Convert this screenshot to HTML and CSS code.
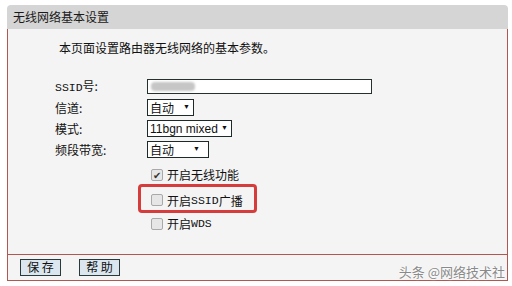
FILE: index.html
```html
<!DOCTYPE html>
<html lang="zh-CN">
<head>
    <meta charset="UTF-8">
    <title>无线网络基本设置</title>
    <link rel="stylesheet" href="styles.css">
</head>
<body>
    <div class="panel">
        <div class="panel-head">无线网络基本设置</div>
        <div class="panel-body">
            <p class="intro">本页面设置路由器无线网络的基本参数。</p>
            <div class="form-grid">
                <label class="lbl"><span class="mono">SSID</span>号:</label>
                <div class="ctl"><span class="text-box"><span class="blur"></span></span></div>
                <label class="lbl">信道:</label>
                <div class="ctl"><span class="drop w-ch">自动<i class="arr">▼</i></span></div>
                <label class="lbl">模式:</label>
                <div class="ctl"><span class="drop w-mode">11bgn mixed<i class="arr">▼</i></span></div>
                <label class="lbl">频段带宽:</label>
                <div class="ctl"><span class="drop w-bw">自动<i class="arr">▼</i></span></div>
            </div>
            <div class="checks">
                <div class="check-row"><span class="box checked">&#10004;</span>开启无线功能</div>
                <div class="check-row mark"><span class="box"></span>开启<span class="mono">SSID</span>广播</div>
                <div class="check-row last"><span class="box"></span>开启<span class="mono">WDS</span></div>
            </div>
        </div>
        <div class="panel-foot">
            <button class="btn">保 存</button>
            <button class="btn">帮 助</button>
        </div>
    </div>
    <div class="watermark">头条 @网络技术社</div>
</body>
</html>
```

FILE: styles.css
```css
html{
    box-sizing: border-box;
    font-family: "Noto Sans CJK SC", sans-serif;
    font-size: 12px;
}
*,*::before,*::after{
    box-sizing: inherit;
    margin: 0;
    padding: 0;
}
body{
    background-color: #fff;
    color: #111;
    position: relative;
    width: 512px;
    height: 286px;
    overflow: hidden;
}
.panel{
    margin: 5px 0 0 7px;
    width: 501px;
}
.panel-head{
    height: 24px;
    line-height: 24px;
    padding-left: 6px;
    background-color: #d5d5d5;
    border-radius: 4px 4px 0 0;
    color: #1a1a1a;
}
.panel-body{
    height: 225px;
    background-color: #f4f4f4;
    border-left: 1px solid #b0574f;
    border-right: 1px solid #b0574f;
    padding-top: 11px;
}
.intro{
    margin-left: 51px;
    line-height: 16px;
}
.form-grid{
    display: grid;
    grid-template-columns: 92px auto;
    grid-auto-rows: 21px;
    margin: 20px 0 0 47px;
    align-items: center;
}
.lbl{
    line-height: 16px;
}
.mono{
    font-family: "Liberation Mono", monospace;
    font-size: 11.5px;
}
.ctl{
    display: flex;
    align-items: center;
}
.text-box{
    display: block;
    width: 225px;
    height: 15px;
    background-color: #fff;
    border: 1px solid #24312f;
    padding: 2px 3px;
}
.blur{
    display: block;
    width: 44px;
    height: 9px;
    background-color: #c6c6c6;
    border-radius: 4px;
    filter: blur(1.2px);
}
.drop{
    display: flex;
    align-items: center;
    height: 17px;
    background-color: #fff;
    border: 1px solid #1e2a28;
    padding-left: 2px;
    font-family: "Liberation Sans", "Noto Sans CJK SC", sans-serif;
    font-size: 12px;
    position: relative;
}
.arr{
    font-style: normal;
    font-size: 7px;
    position: absolute;
    right: 3px;
    top: 3px;
}
.w-ch{ width: 47px; }
.w-mode{ width: 85px; }
.w-bw{ width: 62px; }
.w-bw .arr{ right: 8px; }
.checks{
    margin: 7px 0 0 143px;
}
.check-row{
    display: flex;
    align-items: center;
    height: 15px;
    line-height: 15px;
}
.box{
    display: inline-flex;
    align-items: center;
    justify-content: center;
    width: 12px;
    height: 12px;
    margin-right: 4px;
    background-color: #e6e6e6;
    border: 1px solid #a9a9a9;
    border-radius: 2px;
    font-size: 10px;
    color: #333;
}
.mark{
    margin: 2px 0 0 -13px;
    width: 119px;
    height: 29px;
    border: 3px solid #d63c3c;
    border-radius: 4px;
    padding-left: 10px;
    padding-top: 3px;
}
.last{
    margin-top: 3px;
}
.panel-foot{
    height: 27px;
    background-color: #f4f4f4;
    border: 1px solid #b0574f;
    display: flex;
    align-items: center;
    gap: 18px;
    padding: 0 0 1px 12px;
}
.btn{
    width: 41px;
    height: 17px;
    background-color: #dbe6ee;
    border: 1px solid #2a3a3a;
    font-family: "Noto Sans CJK SC", sans-serif;
    font-size: 12px;
    line-height: 14px;
    color: #111;
}
.watermark{
    position: absolute;
    right: 7px;
    top: 262px;
    font-size: 13px;
    color: #8a8a8a;
    text-shadow: 0 0 2px #fff, 0 0 2px #fff;
}
```
